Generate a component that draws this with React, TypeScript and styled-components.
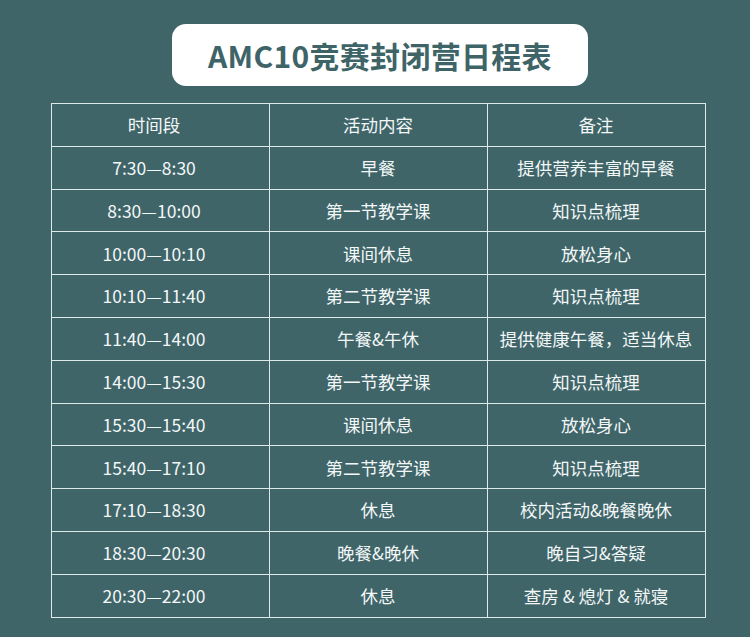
import React from 'react';
import styled, { createGlobalStyle } from 'styled-components';

const GlobalStyle = createGlobalStyle`
  html, body {
    margin: 0;
    padding: 0;
    background: #3f6569;
  }
  body {
    font-family: "Noto Sans CJK SC", "Noto Sans", sans-serif;
  }
`;

const Page = styled.div`
  width: 750px;
  height: 637px;
  background: #3f6569;
  display: flex;
  flex-direction: column;
  align-items: center;
  padding-top: 24px;
  box-sizing: border-box;
`;

const TitleBox = styled.div`
  width: 416px;
  height: 62px;
  margin-left: 10px;
  background: #ffffff;
  border-radius: 14px;
  display: flex;
  align-items: center;
  justify-content: center;
`;

const Title = styled.h1`
  margin: 0;
  font-size: 30px;
  font-weight: 700;
  color: #3e6468;
  letter-spacing: 0.3px;
`;

const Table = styled.table`
  margin-top: 17px;
  margin-left: 6px;
  width: 655px;
  border-collapse: collapse;
  table-layout: fixed;
`;

const Cell = styled.td<{ $shift?: boolean }>`
  height: 41.8px;
  border: 1.5px solid #dcebea;
  padding: 0 ${(p) => (p.$shift ? '12px' : '0')} 0 0;
  text-align: center;
  vertical-align: middle;
  font-size: 17.5px;
  color: #f3f7f7;
  line-height: 1;
`;

const HeadCell = styled(Cell).attrs({ as: 'th' })`
  font-weight: 400;
`;

const rows: [string, string, string][] = [
  ['7:30—8:30', '早餐', '提供营养丰富的早餐'],
  ['8:30—10:00', '第一节教学课', '知识点梳理'],
  ['10:00—10:10', '课间休息', '放松身心'],
  ['10:10—11:40', '第二节教学课', '知识点梳理'],
  ['11:40—14:00', '午餐&午休', '提供健康午餐，适当休息'],
  ['14:00—15:30', '第一节教学课', '知识点梳理'],
  ['15:30—15:40', '课间休息', '放松身心'],
  ['15:40—17:10', '第二节教学课', '知识点梳理'],
  ['17:10—18:30', '休息', '校内活动&晚餐晚休'],
  ['18:30—20:30', '晚餐&晚休', '晚自习&答疑'],
  ['20:30—22:00', '休息', '查房 & 熄灯 & 就寝'],
];

const App: React.FC = () => {
  return (
    <Page>
      <GlobalStyle />
      <TitleBox>
        <Title>AMC10竞赛封闭营日程表</Title>
      </TitleBox>
      <Table>
        <thead>
          <tr>
            <HeadCell $shift>时间段</HeadCell>
            <HeadCell>活动内容</HeadCell>
            <HeadCell>备注</HeadCell>
          </tr>
        </thead>
        <tbody>
          {rows.map((r) => (
            <tr key={r[0]}>
              <Cell $shift>{r[0]}</Cell>
              <Cell>{r[1]}</Cell>
              <Cell>{r[2]}</Cell>
            </tr>
          ))}
        </tbody>
      </Table>
    </Page>
  );
};

export default App;
